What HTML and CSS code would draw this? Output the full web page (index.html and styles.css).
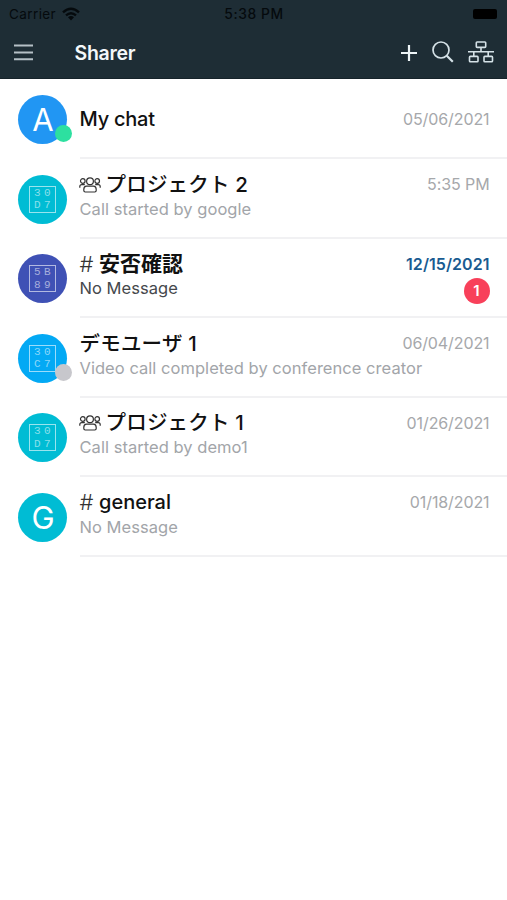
FILE: index.html
```html
<!DOCTYPE html>
<html lang="en">
<head>
<meta charset="utf-8">
<title>Sharer</title>
<link rel="stylesheet" href="styles.css">
</head>
<body>
<svg class="defs" width="0" height="0" aria-hidden="true">
  <symbol id="people" viewBox="0 0 22 16">
    <g fill="none" stroke="#333" stroke-width="1.2">
      <circle cx="11" cy="4.2" r="3.4"/>
      <circle cx="3.8" cy="4" r="2.3"/>
      <circle cx="18.2" cy="4" r="2.3"/>
      <path d="M7.5 9.2h7c1.700 0 2.700 1.300 2.700 3.200v1.200q0 1.400-1.400 1.400H6.200q-1.400 0-1.400-1.400v-1.200c0-1.900 1-3.200 2.700-3.200z"/>
      <path d="M.8 10.800V9.600q0-1.900 2-1.900h3M21.200 10.800V9.600q0-1.900-2-1.900h-3"/>
    </g>
  </symbol>
</svg>
<header class="header">
  <div class="status">
    <div class="carrier"><span>Carrier</span>
      <svg width="18" height="14" viewBox="0 0 18 14"><g fill="none" stroke="#050a0d" stroke-width="2.400"><path d="M1 5.300Q9-2 17 5.300M4 8.400q5-4.400 10 0"/></g><path d="M6 10.300q3-2.500 6 0L9 13.400z" fill="#050a0d"/></svg>
    </div>
    <div class="clock">5:38 PM</div>
    <div class="power"><span class="battery"></span></div>
  </div>
  <div class="bar">
    <svg class="menu" width="19" height="17" viewBox="0 0 19 17"><path d="M0 1.500h19M0 8.500h19M0 15.200h19" stroke="#b5c0c6" stroke-width="2"/></svg>
    <h1 class="title">Sharer</h1>
    <svg class="plus" width="16" height="16" viewBox="0 0 16 16"><path d="M0 8h16M8 0v16" stroke="#eef5f7" stroke-width="2.200"/></svg>
    <svg class="search" width="22" height="22" viewBox="0 0 22 22"><g fill="none" stroke="#d5e2e7"><circle cx="9" cy="9" r="8" stroke-width="1.700"/><path d="M14.800 14.800l6 6" stroke-width="2.200"/></g></svg>
    <svg class="tree" width="26" height="22" viewBox="0 0 26 22"><g fill="none" stroke="#d5e2e7" stroke-width="1.600"><rect x="8.300" y="1" width="9.400" height="5.400" rx=".8"/><rect x="1.500" y="15.400" width="8.500" height="5.400" rx=".8"/><rect x="16" y="15.400" width="8.500" height="5.400" rx=".8"/><path d="M13 6.400v4.400M0 10.800h26M5.800 10.800v4.600M20.200 10.800v4.600"/></g></svg>
  </div>
</header>
<main class="list">
  <article class="row">
    <div class="avatar blue"><span class="letter">A</span><i class="dot online"></i></div>
    <div class="body single">
      <div class="line"><h2 class="name mychat">My chat</h2><time class="date">05/06/2021</time></div>
    </div>
  </article>
  <article class="row">
    <div class="avatar cyan"><div class="glyph"><span>30</span><span>D7</span></div></div>
    <div class="body">
      <div class="line"><svg class="people" width="22" height="16"><use href="#people"/></svg><h2 class="name jp">プロジェクト 2</h2><time class="date">5:35 PM</time></div>
      <div class="line"><p class="message">Call started by google</p></div>
    </div>
  </article>
  <article class="row unread">
    <div class="avatar indigo"><div class="glyph"><span>5B</span><span>89</span></div></div>
    <div class="body">
      <div class="line"><span class="hash">#</span><h2 class="name kanji">安否確認</h2><time class="date">12/15/2021</time></div>
      <div class="line"><p class="message">No Message</p><span class="badge">1</span></div>
    </div>
  </article>
  <article class="row">
    <div class="avatar sky"><div class="glyph"><span>30</span><span>C7</span></div><i class="dot"></i></div>
    <div class="body">
      <div class="line"><h2 class="name jp">デモユーザ 1</h2><time class="date">06/04/2021</time></div>
      <div class="line"><p class="message long">Video call completed by conference creator</p></div>
    </div>
  </article>
  <article class="row">
    <div class="avatar cyan"><div class="glyph"><span>30</span><span>D7</span></div></div>
    <div class="body">
      <div class="line"><svg class="people" width="22" height="16"><use href="#people"/></svg><h2 class="name jp">プロジェクト 1</h2><time class="date">01/26/2021</time></div>
      <div class="line"><p class="message">Call started by demo1</p></div>
    </div>
  </article>
  <article class="row">
    <div class="avatar cyan"><span class="letter">G</span></div>
    <div class="body">
      <div class="line"><span class="hash">#</span><h2 class="name general">general</h2><time class="date">01/18/2021</time></div>
      <div class="line"><p class="message">No Message</p></div>
    </div>
  </article>
</main>
</body>
</html>
```
FILE: styles.css
```css
* { box-sizing: border-box; margin: 0; padding: 0; }
body { width: 507px; height: 900px; overflow: hidden; background: #fff; font-family: Inter, "Noto Sans CJK JP", sans-serif; }
.defs { position: absolute; }
svg { display: block; flex: none; }
.header { height: 79px; background: #1e2d35; border-bottom: 1px solid #16232a; }
.status { display: grid; grid-template-columns: 1fr auto 1fr; align-items: center; height: 27px; padding: 0 10px 0 9px; color: #050a0d; font-size: 13.5px; }
.carrier { display: flex; align-items: center; gap: 6px; letter-spacing: .4px; }
.clock { margin-left: 2px; font-weight: 500; font-size: 13.8px; letter-spacing: .6px; }
.power { display: flex; justify-content: flex-end; }
.battery { width: 24px; height: 10px; border-radius: 2px; background: #000; }
.bar { display: flex; align-items: center; height: 51px; padding: 0 13px 0 14px; }
.title { flex: 1; margin-left: 41.500px; color: #f4f8fa; font-size: 19.5px; font-weight: 600; line-height: 24px; letter-spacing: -.3px; }
.search { margin: 0 0 1px 15px; }
.tree { margin: 0 0 1px 14px; }
.row { display: flex; height: 79.500px; padding-left: 18px; }
.list { padding-top: .5px; }
.avatar { position: relative; display: flex; flex: none; align-items: center; justify-content: center; width: 49px; height: 49px; margin-top: 15.500px; border-radius: 50%; color: #fff; }
.blue { background: #2196f3; }
.cyan { background: #00bcd4; }
.indigo { background: #3f51b5; }
.sky { background: #03a9f4; }
.letter { font-size: 31px; line-height: 49px; padding-left: 1px; }
.dot { position: absolute; right: -5px; bottom: 2px; width: 17px; height: 17px; border-radius: 50%; background: #c7c7cc; }
.online { background: #2de0a0; }
.glyph { display: flex; flex-direction: column; justify-content: center; width: 27px; height: 27px; border: 1.500px solid rgba(255,255,255,.6); color: rgba(255,255,255,.55); font: 11px/12.500px "Liberation Mono", monospace; letter-spacing: 3.400px; padding-left: 4px; }
.body { flex: 1; min-width: 0; margin-left: 12.500px; padding: 12.500px 17.500px 0 0; border-bottom: 2px solid #f1f1f3; }
.single { padding-top: 26.500px; }
.line { display: flex; align-items: center; height: 25px; white-space: nowrap; }
.people { margin: 1px 5px 0 -1px; }
.name { color: #111; font-size: 20px; font-weight: 500; line-height: 25px; letter-spacing: -.2px; padding-top: 1px; }
.mychat { letter-spacing: -.25px; }
.general { letter-spacing: 0; }
.jp { font-size: 20.500px; letter-spacing: .2px; word-spacing: 0; padding-top: 0; }
.kanji { font-size: 21px; font-weight: 600; letter-spacing: 0; padding-top: 0; }
.hash { width: 19.500px; color: #333; font-size: 22px; font-weight: 300; }
.date { margin-left: auto; color: #a6a8ab; font-size: 16px; letter-spacing: -.1px; }
.message { color: #a2a5a9; font-size: 16.500px; line-height: 25px; letter-spacing: .04px; }
.unread .message { color: #45484c; }
.unread .date { color: #195b91; font-weight: 600; letter-spacing: .05px; }
.badge { display: flex; align-items: center; justify-content: center; width: 26px; height: 26px; margin: 4px 0 0 auto; border-radius: 50%; background: #f8405a; color: #fff; font-size: 15px; font-weight: 600; }
```
